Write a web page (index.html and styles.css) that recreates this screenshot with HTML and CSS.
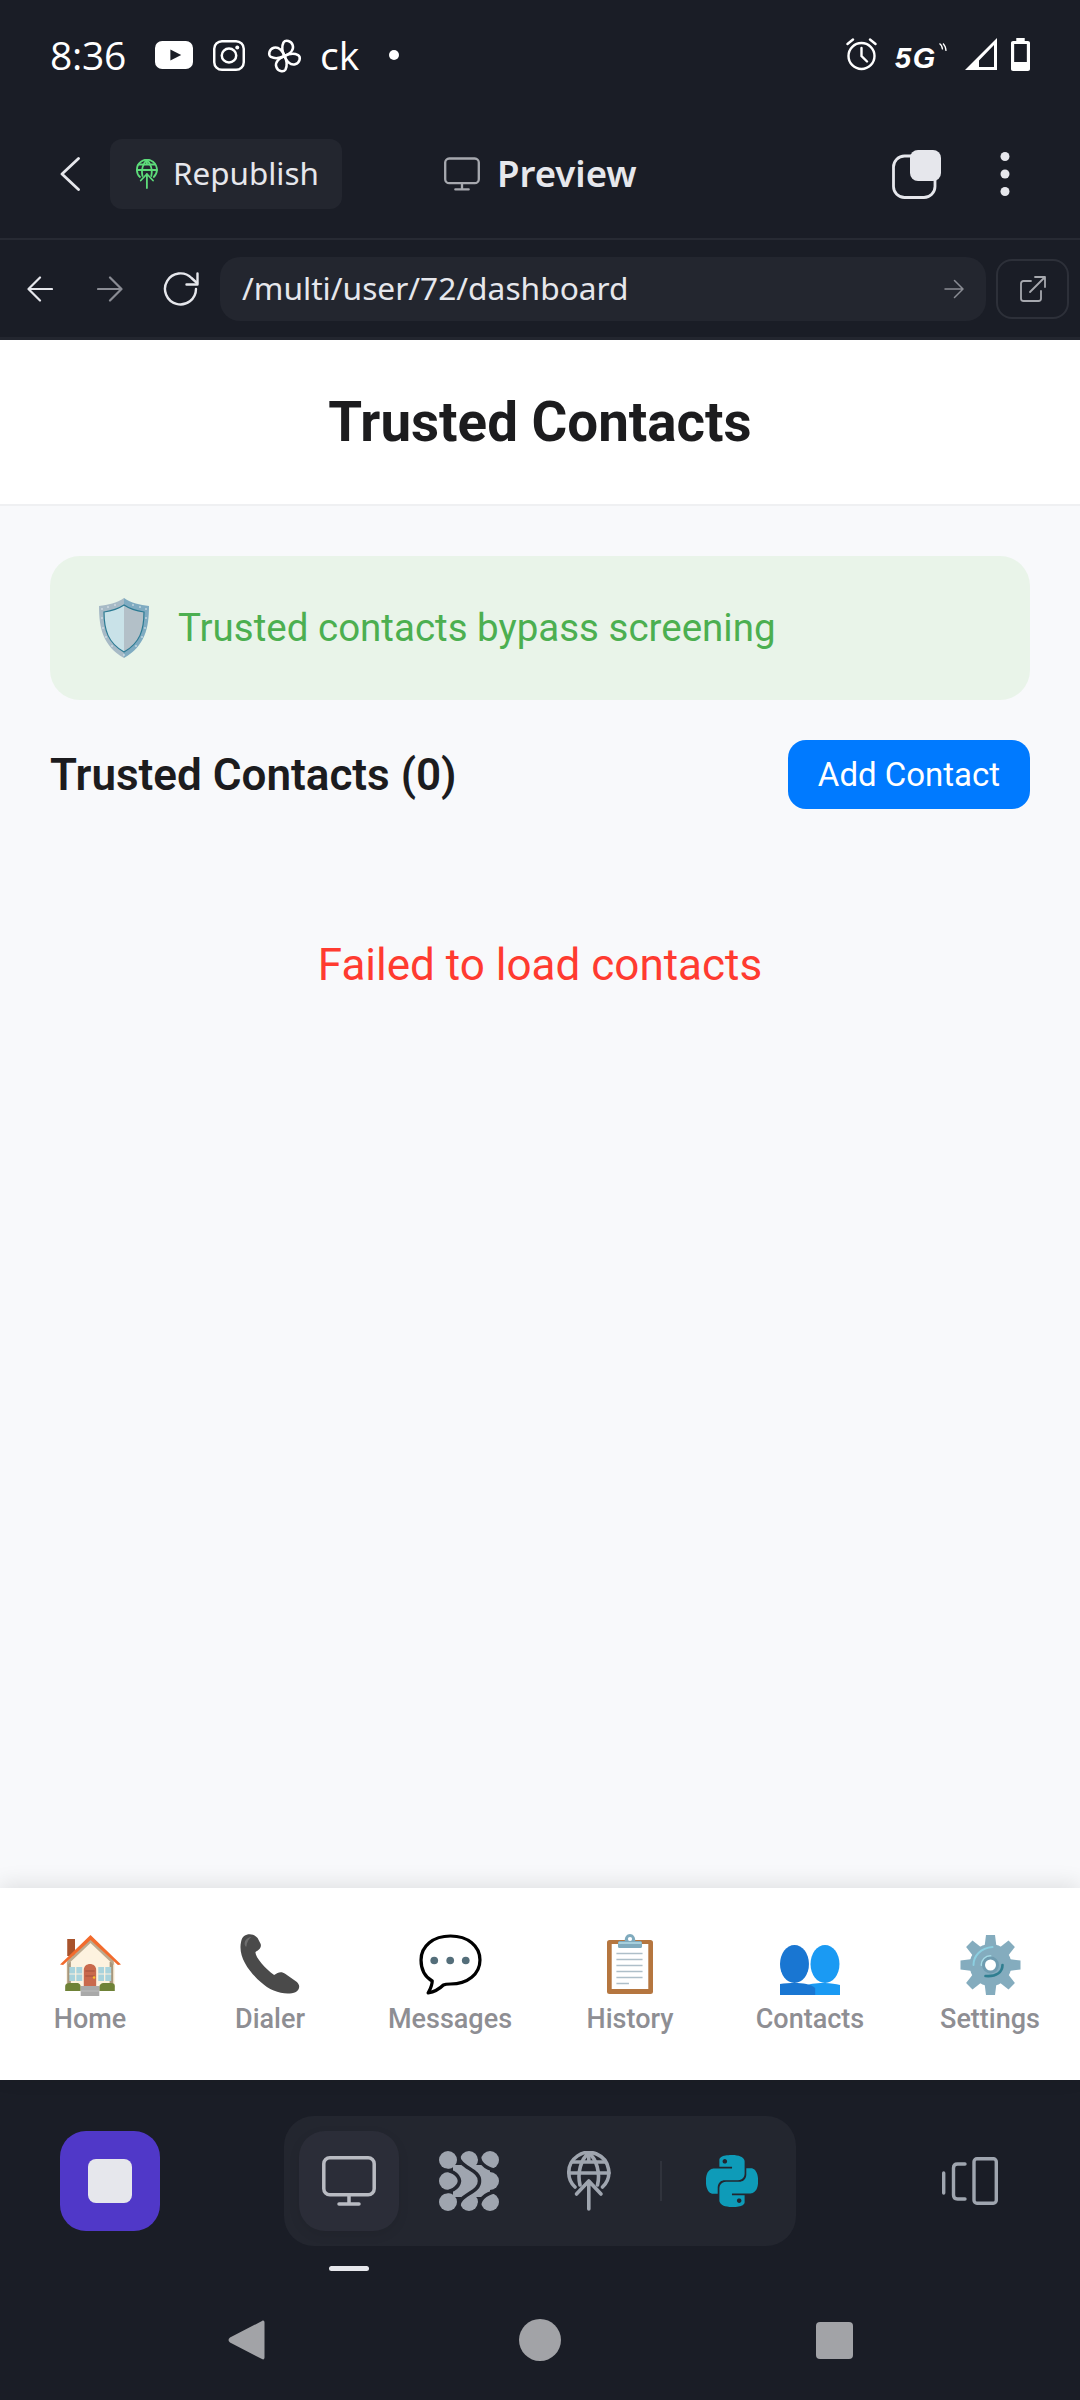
FILE: index.html
```html
<!DOCTYPE html>
<html lang="en">
<head>
<meta charset="utf-8">
<title>Trusted Contacts</title>
<link rel="stylesheet" href="styles.css">
</head>
<body>
<svg class="defs" width="0" height="0">
  <symbol id="globe-up" viewBox="0 0 44 60">
    <g fill="none" stroke="currentColor" stroke-width="3.6" stroke-linecap="round" stroke-linejoin="round">
      <path d="M8 36C3.500 32 1.800 27 1.800 21.800A20 20 0 1 1 35.500 36"/>
      <path d="M13 34C10 22 14 8 21.800 2C29.500 8 33.500 22 30.500 34"/>
      <path d="M21.800 2V10M2 22H42M5 11H38"/>
      <path d="M21.800 58V30M9.500 43L21.800 30L34 43"/>
    </g>
  </symbol>
  <symbol id="monitor" viewBox="0 0 54 50">
    <g fill="none" stroke="currentColor" stroke-width="3.500" stroke-linecap="round" stroke-linejoin="round">
      <rect x="1.800" y="1.800" width="50.400" height="37" rx="6"/>
      <path d="M27 39V47M17 48H37"/>
    </g>
  </symbol>
</svg>
<div class="phone">
  <header class="chrome">
    <div class="status">
      <span class="time">8:36</span>
      <svg class="s-yt" width="38" height="28" viewBox="0 0 37 28" preserveAspectRatio="none"><rect width="37" height="28" rx="7" fill="#fff"/><path d="M15 8.500L25.500 14L15 19.500Z" fill="#1a1d26"/></svg>
      <svg class="s-ig" width="32" height="31" viewBox="0 0 31 31" preserveAspectRatio="none"><g fill="none" stroke="#fff" stroke-width="2.400"><rect x="1.200" y="1.200" width="28.600" height="28.600" rx="7.500"/><circle cx="15.500" cy="15.500" r="7"/></g><circle cx="23.500" cy="7.500" r="1.900" fill="#fff"/></svg>
      <svg class="s-pin" width="35" height="36" viewBox="-18 -18.500 36 37"><g fill="none" stroke="#fff" stroke-width="2.600" stroke-linejoin="round"><path d="M0 0C-2.500 -5 -3 -10 -1 -14C1 -17 7 -16 8.500 -11C10 -6 5 -2 0 0Z"/><path d="M0 0C5 -2.500 10 -3 14 -1C17 1 16 7 11 8.500C6 10 2 5 0 0Z"/><path d="M0 0C2.500 5 3 10 1 14C-1 17 -7 16 -8.500 11C-10 6 -5 2 0 0Z"/><path d="M0 0C-5 2.500 -10 3 -14 1C-17 -1 -16 -7 -11 -8.500C-6 -10 -2 -5 0 0Z"/></g></svg>
      <span class="ck">ck</span>
      <span class="dot"></span>
      <span class="spacer"></span>
      <svg class="s-alarm" width="31" height="33" viewBox="0 0 31 33"><g fill="none" stroke="#fff" stroke-width="2.400" stroke-linecap="round"><circle cx="15.500" cy="18" r="13"/><path d="M15.500 10V18L21 23.500M1.500 6L7 1.500M29.500 6L24 1.500"/></g></svg>
      <span class="five-g">5G</span>
      <svg class="s-arcs" width="8" height="11" viewBox="0 0 8 11"><g fill="none" stroke="#fff" stroke-width="1.200"><path d="M.5 .5C2.500 2 3.500 4 3.500 6.500M4 .5C6 2.500 7 5 7 8"/></g></svg>
      <svg class="s-signal" width="32" height="32" viewBox="0 0 32 32"><path d="M32 0V32H0ZM29 7L14 22.500V29H29Z" fill="#fff" fill-rule="evenodd"/></svg>
      <svg class="s-batt" width="19" height="33" viewBox="0 0 18 33" preserveAspectRatio="none"><path d="M5 0H13V3H16C17.200 3 18 3.800 18 5V31C18 32.200 17.200 33 16 33H2C.800 33 0 32.200 0 31V5C0 3.800 .800 3 2 3H5Z" fill="#fff"/><rect x="3" y="6" width="12" height="18" fill="#1a1d26"/></svg>
    </div>
    <div class="toolbar">
      <svg class="back" width="20" height="34" viewBox="0 0 20 34"><path d="M18.500 1.500L2 17L18.500 32.500" fill="none" stroke="#e6e7ec" stroke-width="2.800" stroke-linecap="round" stroke-linejoin="round"/></svg>
      <button class="republish"><svg class="rep-icon" width="22" height="30"><use href="#globe-up"/></svg><span class="rep-text">Republish</span></button>
      <div class="preview"><svg class="pv-icon" width="36" height="34"><use href="#monitor"/></svg><span class="pv-text">Preview</span></div>
      <svg class="tabs" width="49" height="49" viewBox="0 0 49 49"><rect x="1.500" y="6" width="41.500" height="41.500" rx="11" fill="none" stroke="#e6e7ec" stroke-width="2.800"/><rect x="18" y="0" width="31" height="31" rx="8" fill="#e6e7ec"/></svg>
      <svg class="kebab" width="10" height="44" viewBox="0 0 10 44"><g fill="#e6e7ec"><circle cx="5" cy="4.500" r="4.500"/><circle cx="5" cy="22" r="4.500"/><circle cx="5" cy="39.500" r="4.500"/></g></svg>
    </div>
    <div class="urlrow">
      <svg class="nav-back" width="26" height="26" viewBox="0 0 26 26"><path d="M25 13H2M13 1.500L1.500 13L13 24.500" fill="none" stroke="#e6e7ec" stroke-width="2.200" stroke-linecap="round" stroke-linejoin="round"/></svg>
      <svg class="nav-fwd" width="26" height="26" viewBox="0 0 26 26"><path d="M1 13H24M13 1.500L24.500 13L13 24.500" fill="none" stroke="#8a8c94" stroke-width="2.200" stroke-linecap="round" stroke-linejoin="round"/></svg>
      <svg class="reload" width="36" height="34" viewBox="0 0 36 34"><g fill="none" stroke="#e6e7ec" stroke-width="2.400" stroke-linecap="round" stroke-linejoin="round"><path d="M33 17A15.500 15.500 0 1 1 28.500 6L34 11"/><path d="M34.500 1.500V12.500H23.500"/></g></svg>
      <div class="urlbar"><span class="url">/multi/user/72/dashboard</span><svg width="20" height="20" viewBox="0 0 20 20"><path d="M1 10H18.500M10.500 1.500L19 10L10.500 18.500" fill="none" stroke="#8a8c94" stroke-width="1.500" stroke-linecap="round" stroke-linejoin="round"/></svg></div>
      <button class="open"><svg width="26" height="26" viewBox="0 0 26 26"><g fill="none" stroke="#a6a8ae" stroke-width="1.800" stroke-linecap="round" stroke-linejoin="round"><path d="M11 5H3.500C2 5 1 6 1 7.500V22.500C1 24 2 25 3.500 25H18.500C20 25 21 24 21 22.500V15"/><path d="M10 16L24.500 1.500M15 1H25V11"/></g></svg></button>
    </div>
  </header>

  <div class="page-head"><h1>Trusted Contacts</h1></div>

  <main class="content">
    <div class="banner">
      <svg class="shield" width="50" height="60" viewBox="0 0 50 60">
        <path d="M25 0C18 5 9 7 0 8C0 30 4 48 25 60Z" fill="#a7bac6"/>
        <path d="M25 0C32 5 41 7 50 8C50 30 46 48 25 60Z" fill="#7fabc1"/>
        <path d="M25 7C19 11 12 13 5 14C5 32 9 45 25 54Z" fill="#c9e2e8"/>
        <path d="M25 7C31 11 38 13 45 14C45 32 41 45 25 54Z" fill="#b3c0c8"/>
        <path d="M25 7C31 11 38 13 45 14C45 32 41 45 25 54C9 45 5 32 5 14C12 13 19 11 25 7Z" fill="none" stroke="#2b7a93" stroke-width="1.200"/>
        <g fill="#e8f0f3"><circle cx="3" cy="11" r=".8"/><circle cx="9" cy="9" r=".8"/><circle cx="16" cy="7" r=".8"/><circle cx="34" cy="7" r=".8"/><circle cx="41" cy="9" r=".8"/><circle cx="47" cy="11" r=".8"/><circle cx="3" cy="20" r=".8"/><circle cx="47" cy="20" r=".8"/><circle cx="4" cy="30" r=".8"/><circle cx="46" cy="30" r=".8"/><circle cx="7" cy="39" r=".8"/><circle cx="43" cy="39" r=".8"/><circle cx="13" cy="48" r=".8"/><circle cx="37" cy="48" r=".8"/><circle cx="25" cy="57" r=".8"/></g>
      </svg>
      <span class="banner-text">Trusted contacts bypass screening</span>
    </div>
    <div class="section-row">
      <h2>Trusted Contacts (0)</h2>
      <button class="add">Add Contact</button>
    </div>
    <p class="error">Failed to load contacts</p>
  </main>

  <nav class="tabbar">
    <div class="tab">
      <svg class="emoji" width="61" height="62" viewBox="0 0 59 62" preserveAspectRatio="none">
        <rect x="7" y="5" width="7.500" height="17" fill="#a8532c"/>
        <path d="M6 29L29.500 5L53 29V54H6Z" fill="#fdf2df"/>
        <path d="M7 28H10.500V53H7ZM48 28H51.500V53H48Z" fill="#a8977c"/>
        <path d="M7 31L29.500 9L52 31L52 27L29.500 5L7 27Z" fill="#bba98e"/>
        <path d="M0 30.500L29.500 1L59 30.500L56 31L29.500 6L3 31Z" fill="#f26b2d"/>
        <g fill="#a9d3dc"><rect x="9" y="33" width="12.500" height="14"/><rect x="37" y="33" width="12.500" height="14"/></g>
        <path d="M15.200 33V47M9 40H21.500M43.200 33V47M37 40H49.500" stroke="#fdf2df" stroke-width="1.200"/>
        <path d="M23 52V36C23 32 26 30 29 30C32 30 35 32 35 36V52Z" fill="#c9694c"/>
        <path d="M24.500 42H33.500M24.500 37H33.500" stroke="#a3503a" stroke-width="1"/>
        <circle cx="33" cy="43.500" r="1.200" fill="#f7c02c"/>
        <path d="M5 57V52C5 50 7 49 9 49H16C19 49 20 51 20 53V57Z" fill="#6f8237"/>
        <path d="M38 57V53C38 51 40 49 42 49H49C52 49 53 50 53 52V57Z" fill="#6f8237"/>
        <rect x="20" y="52" width="18" height="10" fill="#a9a9a9"/>
        <path d="M20 57H38" stroke="#bdbdbd" stroke-width="1"/>
      </svg>
      <span class="tab-label">Home</span>
    </div>
    <div class="tab">
      <svg class="emoji" width="60" height="62" viewBox="0 0 58 62" preserveAspectRatio="none">
        <path d="M4 2C8 -1 14 0 17 4L20 10C21 14 18 16 15 18C14 22 24 35 33 41C37 38 40 37 44 40L55 48C59 52 57 56 54 58C45 62 30 58 20 48C8 37 -2 22 1 8C1.500 5 2.500 3 4 2Z" fill="#4a4a4a"/>
        <path d="M5 7C7 4 9 3 11 3C8 5 7 8 6 13C4.500 12 4 9 5 7Z" fill="#6e6e6e"/>
      </svg>
      <span class="tab-label">Dialer</span>
    </div>
    <div class="tab">
      <svg class="emoji" width="63" height="62" viewBox="0 0 62 62" preserveAspectRatio="none">
        <path d="M31 2C48 2 60 12 60 26C60 40 48 50 31 50C28 50 26 50 24 51C20 55 14 58 9 59C11 55 13 52 13 47C6 43 2 35 2 26C2 12 14 2 31 2Z" fill="#fff" stroke="#000" stroke-width="3.200" stroke-linejoin="round"/>
        <g fill="#546e7a"><circle cx="15" cy="26.500" r="3.800"/><circle cx="30.700" cy="26.500" r="3.800"/><circle cx="46" cy="26.500" r="3.800"/></g>
      </svg>
      <span class="tab-label">Messages</span>
    </div>
    <div class="tab">
      <svg class="emoji" width="46" height="62" viewBox="0 0 44 62" preserveAspectRatio="none">
        <rect x="0" y="6" width="44" height="54" rx="2.500" fill="#b5763f"/>
        <rect x="4.500" y="10" width="35" height="45" fill="#fff"/>
        <path d="M9 19.500H34M9 25.500H34M9 31.500H34M9 37.500H34M9 43.500H34M9 49.500H21" stroke="#aebfc9" stroke-width="1.400"/>
        <path d="M17 7V6C17 3 19 0 22 0C25 0 27 3 27 6V7H32C33 7 33.500 8 33.500 9V12C33.500 13.500 33 14 32 14H12C11 14 10.500 13.500 10.500 12V9C10.500 8 11 7 12 7Z" fill="#7faabd"/>
        <circle cx="22" cy="5" r="2" fill="#fff"/>
        <rect x="11" y="8" width="22" height="2" fill="#a6cfdc"/>
      </svg>
      <span class="tab-label">History</span>
    </div>
    <div class="tab">
      <svg class="emoji" width="60" height="62" viewBox="0 0 58 62" preserveAspectRatio="none">
        <ellipse cx="43.500" cy="30" rx="14" ry="19" fill="#1a9af3"/>
        <path d="M24 61V52C30 49 38 49 43.500 49C49 49 54 50 58 51V61Z" fill="#1a9af3"/>
        <ellipse cx="14" cy="30" rx="14" ry="19" fill="#1976d2"/>
        <path d="M0 61V50C4 49 10 49 14 49C22 49 30 50 34 54V61Z" fill="#1976d2"/>
      </svg>
      <span class="tab-label">Contacts</span>
    </div>
    <div class="tab">
      <svg class="emoji" width="61" height="62" viewBox="-30 -31 60 62">
        <g fill="#84acbe">
          <circle r="21"/>
          <path d="M-6 -18L-4.500 -30H4.500L6 -18Z"/>
          <path d="M-6 -18L-4.500 -30H4.500L6 -18Z" transform="rotate(45)"/>
          <path d="M-6 -18L-4.500 -30H4.500L6 -18Z" transform="rotate(90)"/>
          <path d="M-6 -18L-4.500 -30H4.500L6 -18Z" transform="rotate(135)"/>
          <path d="M-6 -18L-4.500 -30H4.500L6 -18Z" transform="rotate(180)"/>
          <path d="M-6 -18L-4.500 -30H4.500L6 -18Z" transform="rotate(225)"/>
          <path d="M-6 -18L-4.500 -30H4.500L6 -18Z" transform="rotate(270)"/>
          <path d="M-6 -18L-4.500 -30H4.500L6 -18Z" transform="rotate(315)"/>
        </g>
        <g fill="none" stroke-linecap="round">
          <path d="M-17 0C-17 -9 -10 -17 2 -18" stroke="#8ccfe0" stroke-width="2"/>
          <path d="M-9 0C-9 -5 -5 -9 0 -9" stroke="#a6dbe6" stroke-width="2"/>
          <path d="M12 0C12 7 6 12 -5 11" stroke="#2f7e90" stroke-width="2.600"/>
        </g>
        <circle r="8.500" fill="#6f9cb0"/>
        <circle r="5.500" fill="#fff"/>
      </svg>
      <span class="tab-label">Settings</span>
    </div>
  </nav>

  <footer class="dock">
    <div class="dock-row">
      <button class="stop"><span class="stop-square"></span></button>
      <div class="tray">
        <button class="tray-btn active"><svg width="54" height="50"><use href="#monitor"/></svg></button>
        <svg class="cluster" width="60" height="60" viewBox="0 0 60 60">
          <g fill="#9fa5af">
            <circle cx="9" cy="9" r="9"/><circle cx="9" cy="30" r="9"/><circle cx="9" cy="51" r="9"/>
            <circle cx="30" cy="9" r="9"/><circle cx="30" cy="51" r="9"/>
            <circle cx="51" cy="9" r="9"/><circle cx="51" cy="30" r="9"/><circle cx="51" cy="51" r="9"/>
            <rect x="14" y="14" width="37" height="32"/>
          </g>
          <g fill="none" stroke="#23262f" stroke-width="3.500">
            <path d="M-1 19.500C12 17 20 24 20.500 30C20 36 12 43 -1 40.500"/>
            <path d="M19.500 4C19.500 17 41 18 40.500 30C41 42 19.500 43 19.500 56"/>
            <path d="M40 4C40.500 14 50 19.500 61 19.500"/>
            <path d="M40 56C40.500 46 50 40.500 61 40.500"/>
          </g>
        </svg>
        <svg class="tray-globe" width="44" height="60"><use href="#globe-up"/></svg>
        <span class="divider"></span>
        <svg class="python" width="52" height="52" viewBox="0 0 24 24"><path fill="#0e9bb8" d="M14.250.18l.9.2.730.260.590.300.450.320.340.340.250.340.160.330.100.300.040.260.020.200-.010.130V8.500l-.050.630-.130.550-.210.460-.260.380-.300.310-.330.250-.350.190-.350.140-.330.100-.300.070-.260.040-.210.020H8.770l-.690.050-.590.140-.500.220-.410.270-.330.320-.270.350-.200.360-.150.370-.100.350-.070.320-.040.270-.020.210v3.060H3.170l-.210-.030-.280-.070-.320-.120-.350-.180-.360-.260-.360-.360-.350-.460-.320-.590-.280-.730-.210-.880-.140-1.050-.050-1.230.060-1.220.160-1.040.240-.870.320-.710.360-.570.400-.440.420-.330.420-.240.400-.160.360-.100.320-.050.240-.010h.160l.060.010h8.160v-.83H6.180l-.010-2.750-.020-.370.050-.340.110-.310.170-.280.250-.260.310-.230.380-.200.440-.180.510-.150.580-.120.640-.100.710-.060.770-.040.840-.020 1.270.050zm-6.300 1.980l-.230.330-.080.410.080.410.230.340.330.220.410.090.410-.090.330-.220.230-.340.080-.41-.080-.41-.230-.33-.330-.22-.41-.09-.41.090zm13.090 3.950l.280.060.320.120.350.180.360.270.360.350.350.470.320.590.280.730.210.880.140 1.040.050 1.230-.060 1.230-.160 1.040-.240.860-.320.710-.360.570-.400.450-.420.330-.420.240-.400.160-.360.090-.320.050-.240.020-.160-.010h-8.220v.82h5.840l.01 2.760.02.360-.050.340-.110.310-.170.290-.250.250-.310.240-.380.200-.440.170-.510.150-.580.130-.640.090-.710.070-.770.040-.840.010-1.270-.040-1.070-.140-.900-.200-.730-.250-.590-.300-.450-.330-.340-.340-.250-.340-.160-.330-.100-.300-.040-.250-.020-.200.010-.130v-5.340l.050-.640.130-.540.210-.460.260-.380.300-.320.330-.240.350-.200.350-.140.330-.100.300-.060.260-.040.210-.020.130-.010h5.840l.690-.050.590-.140.500-.210.410-.280.330-.320.270-.350.200-.360.150-.360.100-.350.070-.320.040-.280.020-.21V6.070h2.090l.140.010zm-6.470 14.250l-.230.330-.080.410.080.410.230.330.330.230.410.080.410-.080.330-.230.230-.330.080-.41-.080-.41-.230-.33-.330-.23-.410-.08-.410.080z"/></svg>
      </div>
      <svg class="devices" width="56" height="48" viewBox="0 0 56 48"><g fill="none" stroke="#9fa5af" stroke-width="3.400" stroke-linecap="round" stroke-linejoin="round"><rect x="32" y="1.700" width="22.300" height="44.600" rx="3"/><path d="M23 7H15.500C13 7 11.500 8.500 11.500 11V38C11.500 40.500 13 42 15.500 42H23"/><path d="M1.700 16V36"/></g></svg>
    </div>
    <span class="indicator"></span>
    <div class="sysnav">
      <svg width="38" height="42" viewBox="0 0 38 42"><path d="M35 2L3 18.500C1 20 1 22 3 23.500L35 40C36.500 41 37.500 40 37.500 38.500V3.500C37.500 2 36.500 1 35 2Z" fill="#a2a3a7"/></svg>
      <span class="sys-circle"></span>
      <span class="sys-square"></span>
    </div>
  </footer>
</div>
</body>
</html>
```
FILE: styles.css
```css
* { box-sizing: border-box; }
html, body { margin: 0; padding: 0; }
body { background: #1a1d26; font-family: "Roboto", sans-serif; }
.defs { position: absolute; }
button { border: 0; padding: 0; font: inherit; }
svg { display: block; flex: none; }

.phone { width: 1080px; height: 2400px; display: flex; flex-direction: column; overflow: hidden; }

/* top chrome */
.chrome { background: #1a1d26; color: #e6e7ec; font-family: "Noto Sans", sans-serif; }
.status { height: 80px; padding: 38px 50px 0 50px; display: flex; align-items: flex-start; color: #fff; }
.time { font-family: "Open Sans", sans-serif; font-size: 39px; line-height: 34px; width: 105px; letter-spacing: -.3px; }
.s-yt { margin-top: 3px; }
.s-ig { margin: 2px 0 0 20px; }
.s-pin { margin: 0 0 0 22px; }
.ck { font-family: "Open Sans", sans-serif; font-size: 39px; line-height: 34px; margin-left: 18px; width: 69px; }
.dot { width: 10px; height: 10px; border-radius: 50%; background: #fff; margin-top: 12px; }
.spacer { flex: 1; }
.five-g { font-family: "Liberation Sans", sans-serif; font-weight: 700; font-style: italic; font-size: 29px; line-height: 30px; margin: 5px 0 0 18px; width: 44px; letter-spacing: 1.500px; }
.s-arcs { margin: 5px 0 0 0; }
.s-signal { margin-left: 18px; }
.s-batt { margin-left: 14px; }

.toolbar { height: 160px; border-bottom: 2px solid #272a33; display: flex; align-items: center; padding: 30px 70px 0 60px; }
.republish { margin-left: 30px; width: 232px; height: 70px; background: #23262f; border-radius: 12px; color: #e6e7ec; display: flex; align-items: center; padding-left: 26px; font-family: "Noto Sans", sans-serif; font-size: 31.400px; }
.rep-icon { color: #5ddc7a; margin-right: 15px; }
.rep-text { padding-bottom: 3px; }
.preview { margin-left: 102px; display: flex; align-items: center; font-size: 36.600px; font-weight: 600; }
.pv-icon { color: #a6a8ae; margin-right: 17px; }
.pv-text { padding-bottom: 3px; }
.tabs { margin-left: auto; }
.kebab { margin-left: 59px; }

.urlrow { height: 100px; border-bottom: 3px solid #23262f; display: flex; align-items: center; padding: 0 0 0 27px; }
.nav-fwd { margin-left: 44px; }
.reload { margin-left: 40px; }
.urlbar { margin-left: 21px; width: 766px; height: 64px; background: #23262f; border-radius: 20px; display: flex; align-items: center; justify-content: space-between; padding: 0 22px 0 22px; }
.url { font-size: 31.700px; padding-bottom: 3px; }
.open { margin-left: 10px; width: 73px; height: 60px; background: transparent; border: 2px solid #2d3039; border-radius: 16px; display: flex; align-items: center; justify-content: center; }

/* page */
.page-head { height: 166px; background: #fff; border-bottom: 2px solid #eff0f2; display: flex; align-items: center; justify-content: center; }
h1 { margin: 0; font-size: 54.700px; font-weight: 700; color: #1c1c1e; }
.content { flex: 1; background: #f8f9fb; padding: 50px 50px 0; }
.banner { height: 144px; background: #e9f4e9; border-radius: 30px; display: flex; align-items: center; padding-left: 49px; }
.banner-text { margin-left: 29px; font-size: 38.500px; padding-bottom: 1px; color: #4caf50; }
.section-row { margin-top: 40px; height: 69px; display: flex; align-items: center; justify-content: space-between; }
h2 { margin: 0; font-size: 44px; font-weight: 600; color: #1c1c1e; }
.add { width: 242px; height: 69px; background: #007aff; color: #fff; border-radius: 18px; font-family: "Roboto", sans-serif; font-size: 33px; }
.error { margin: 126px 0 0; text-align: center; font-size: 44px; line-height: 60px; color: #ff3b30; }

/* bottom tabs */
.tabbar { height: 192px; background: #fff; box-shadow: 0 -4px 20px rgba(0, 0, 0, .1); display: grid; grid-template-columns: repeat(6, 1fr); padding-top: 46px; position: relative; }
.tab { display: flex; flex-direction: column; align-items: center; }
.tab-label { margin-top: 5px; font-size: 27px; line-height: 36px; font-weight: 500; color: #8e8e93; }

/* dock */
.dock { height: 320px; background: #1a1d26; display: flex; flex-direction: column; align-items: flex-start; padding-top: 36px; }
.dock-row { display: flex; align-items: center; height: 130px; width: 100%; padding-left: 60px; }
.stop { width: 100px; height: 100px; background: #5038c8; border-radius: 26px; display: flex; align-items: center; justify-content: center; }
.stop-square { width: 44px; height: 44px; background: #e6e7ec; border-radius: 8px; }
.tray { margin-left: 124px; width: 512px; height: 130px; background: #23262f; border-radius: 30px; display: flex; align-items: center; padding-left: 15px; }
.tray-btn { width: 100px; height: 100px; background: #2b2d38; border-radius: 26px; color: #b9bbc2; display: flex; align-items: center; justify-content: center; box-shadow: 0 4px 12px rgba(0, 0, 0, .08); }
.cluster { margin-left: 40px; }
.tray-globe { margin-left: 68px; color: #9fa5af; }
.divider { margin-left: 49px; width: 2px; height: 40px; background: #30333c; }
.python { margin-left: 44px; }
.devices { margin-left: 146px; }
.indicator { margin: 20px 0 0 329px; width: 40px; height: 5px; border-radius: 3px; background: #e6e7ec; }
.sysnav { margin-top: 48px; width: 100%; padding-left: 227px; display: flex; align-items: center; }
.sys-circle { margin-left: 254px; width: 42px; height: 42px; border-radius: 50%; background: #a2a3a7; }
.sys-square { margin-left: 255px; width: 37px; height: 37px; border-radius: 4px; background: #a2a3a7; }
```
